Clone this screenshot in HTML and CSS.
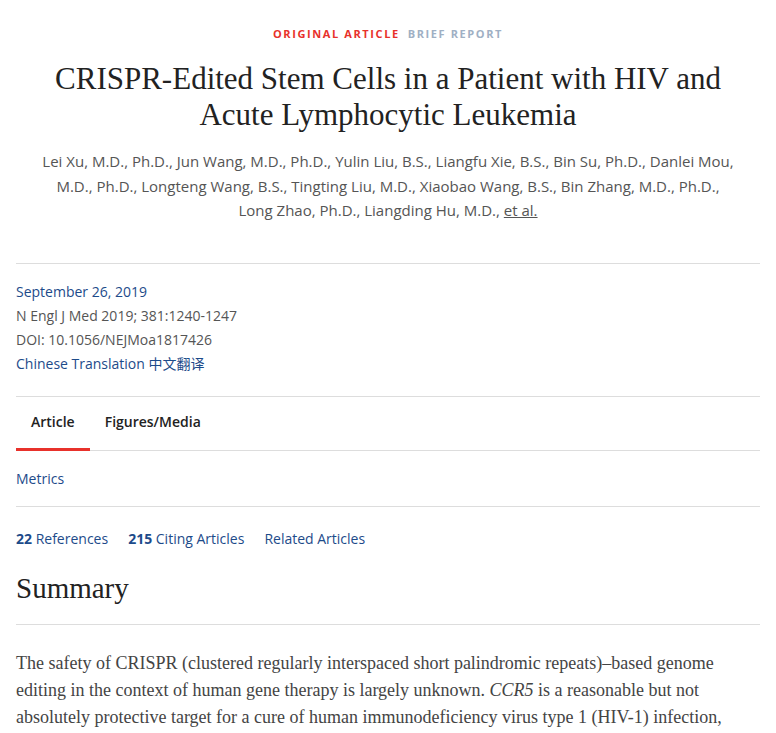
FILE: index.html
```html
<!DOCTYPE html>
<html lang="en">
<head>
<meta charset="utf-8">
<title>CRISPR-Edited Stem Cells</title>
<link rel="stylesheet" href="styles.css">
</head>
<body>
<main class="page">
  <header class="head">
    <div class="kicker"><span class="k-red">ORIGINAL ARTICLE</span><span class="k-grey">BRIEF REPORT</span></div>
    <h1 class="title">CRISPR-Edited Stem Cells in a Patient with HIV and Acute Lymphocytic Leukemia</h1>
    <p class="authors">Lei Xu, M.D., Ph.D., Jun Wang, M.D., Ph.D., Yulin Liu, B.S., Liangfu Xie, B.S., Bin Su, Ph.D., Danlei Mou, M.D., Ph.D., Longteng Wang, B.S., Tingting Liu, M.D., Xiaobao Wang, B.S., Bin Zhang, M.D., Ph.D., Long&nbsp;Zhao, Ph.D., Liangding Hu, M.D., <a class="etal" href="#">et al.</a></p>
  </header>
  <section class="meta">
    <a class="link" href="#">September 26, 2019</a>
    <div>N Engl J Med 2019; 381:1240-1247</div>
    <div>DOI: 10.1056/NEJMoa1817426</div>
    <a class="link" href="#">Chinese Translation 中文翻译</a>
  </section>
  <nav class="tabs">
    <a class="tab active" href="#">Article</a>
    <a class="tab" href="#">Figures/Media</a>
  </nav>
  <div class="metrics"><a class="link" href="#">Metrics</a></div>
  <div class="refs">
    <a class="link" href="#"><b>22</b> References</a>
    <a class="link" href="#"><b>215</b> Citing Articles</a>
    <a class="link" href="#">Related Articles</a>
  </div>
  <h2 class="summary">Summary</h2>
  <p class="body">The safety of CRISPR (clustered regularly interspaced short palindromic repeats)–based genome editing in the context of human gene therapy is largely unknown. <i>CCR5</i> is a reasonable but not absolutely protective target for a cure of human immunodeficiency virus type 1 (HIV-1) infection,</p>
</main>
</body>
</html>
```
FILE: styles.css
```css
* { box-sizing: border-box; }
body { margin: 0; background: #fff; font-family: "Open Sans", "Noto Sans CJK SC", sans-serif; color: #555; }
.page { padding: 0 16px; }
a { text-decoration: none; }
.head { text-align: center; padding-top: 27px; padding-bottom: 40px; border-bottom: 1px solid #ddd; }
.kicker { font-size: 11px; font-weight: 700; letter-spacing: 1.6px; line-height: 14px; }
.k-red { color: #e8312b; margin-right: 8px; }
.k-grey { color: #9fb0c4; }
.title { font-family: "Liberation Serif", serif; font-weight: 400; font-size: 31px; line-height: 36px; color: #222; margin: 20px 0 0; }
.authors { font-size: 15px; line-height: 24.5px; margin: 16px auto 0; max-width: 696px; color: #555; }
.etal { color: #555; text-decoration: underline; }
.meta { display: flex; flex-direction: column; padding: 16px 0 20px; font-size: 14px; line-height: 24px; border-bottom: 1px solid #ddd; }
.link { color: #1d4b8a; }
.tabs { display: flex; border-bottom: 1px solid #ddd; }
.tab { font-size: 14px; font-weight: 600; color: #222; padding: 14px 15px 15px; border-bottom: 3px solid transparent; margin-bottom: -1px; line-height: 22px; }
.tab.active { border-bottom-color: #e8312b; }
.metrics { padding: 16px 0 15px; font-size: 14px; line-height: 24px; border-bottom: 1px solid #ddd; }
.refs { display: flex; gap: 20px; padding: 20px 0 0; font-size: 14px; line-height: 24px; }
.refs b { font-weight: 700; }
.summary { font-family: "Liberation Serif", serif; font-weight: 400; font-size: 29px; line-height: 34px; color: #222; margin: 20px 0 0; padding-bottom: 19px; border-bottom: 1px solid #ddd; }
.body { font-family: "Liberation Serif", serif; font-size: 18px; line-height: 27px; color: #444; margin: 25px 0 0; }
```
